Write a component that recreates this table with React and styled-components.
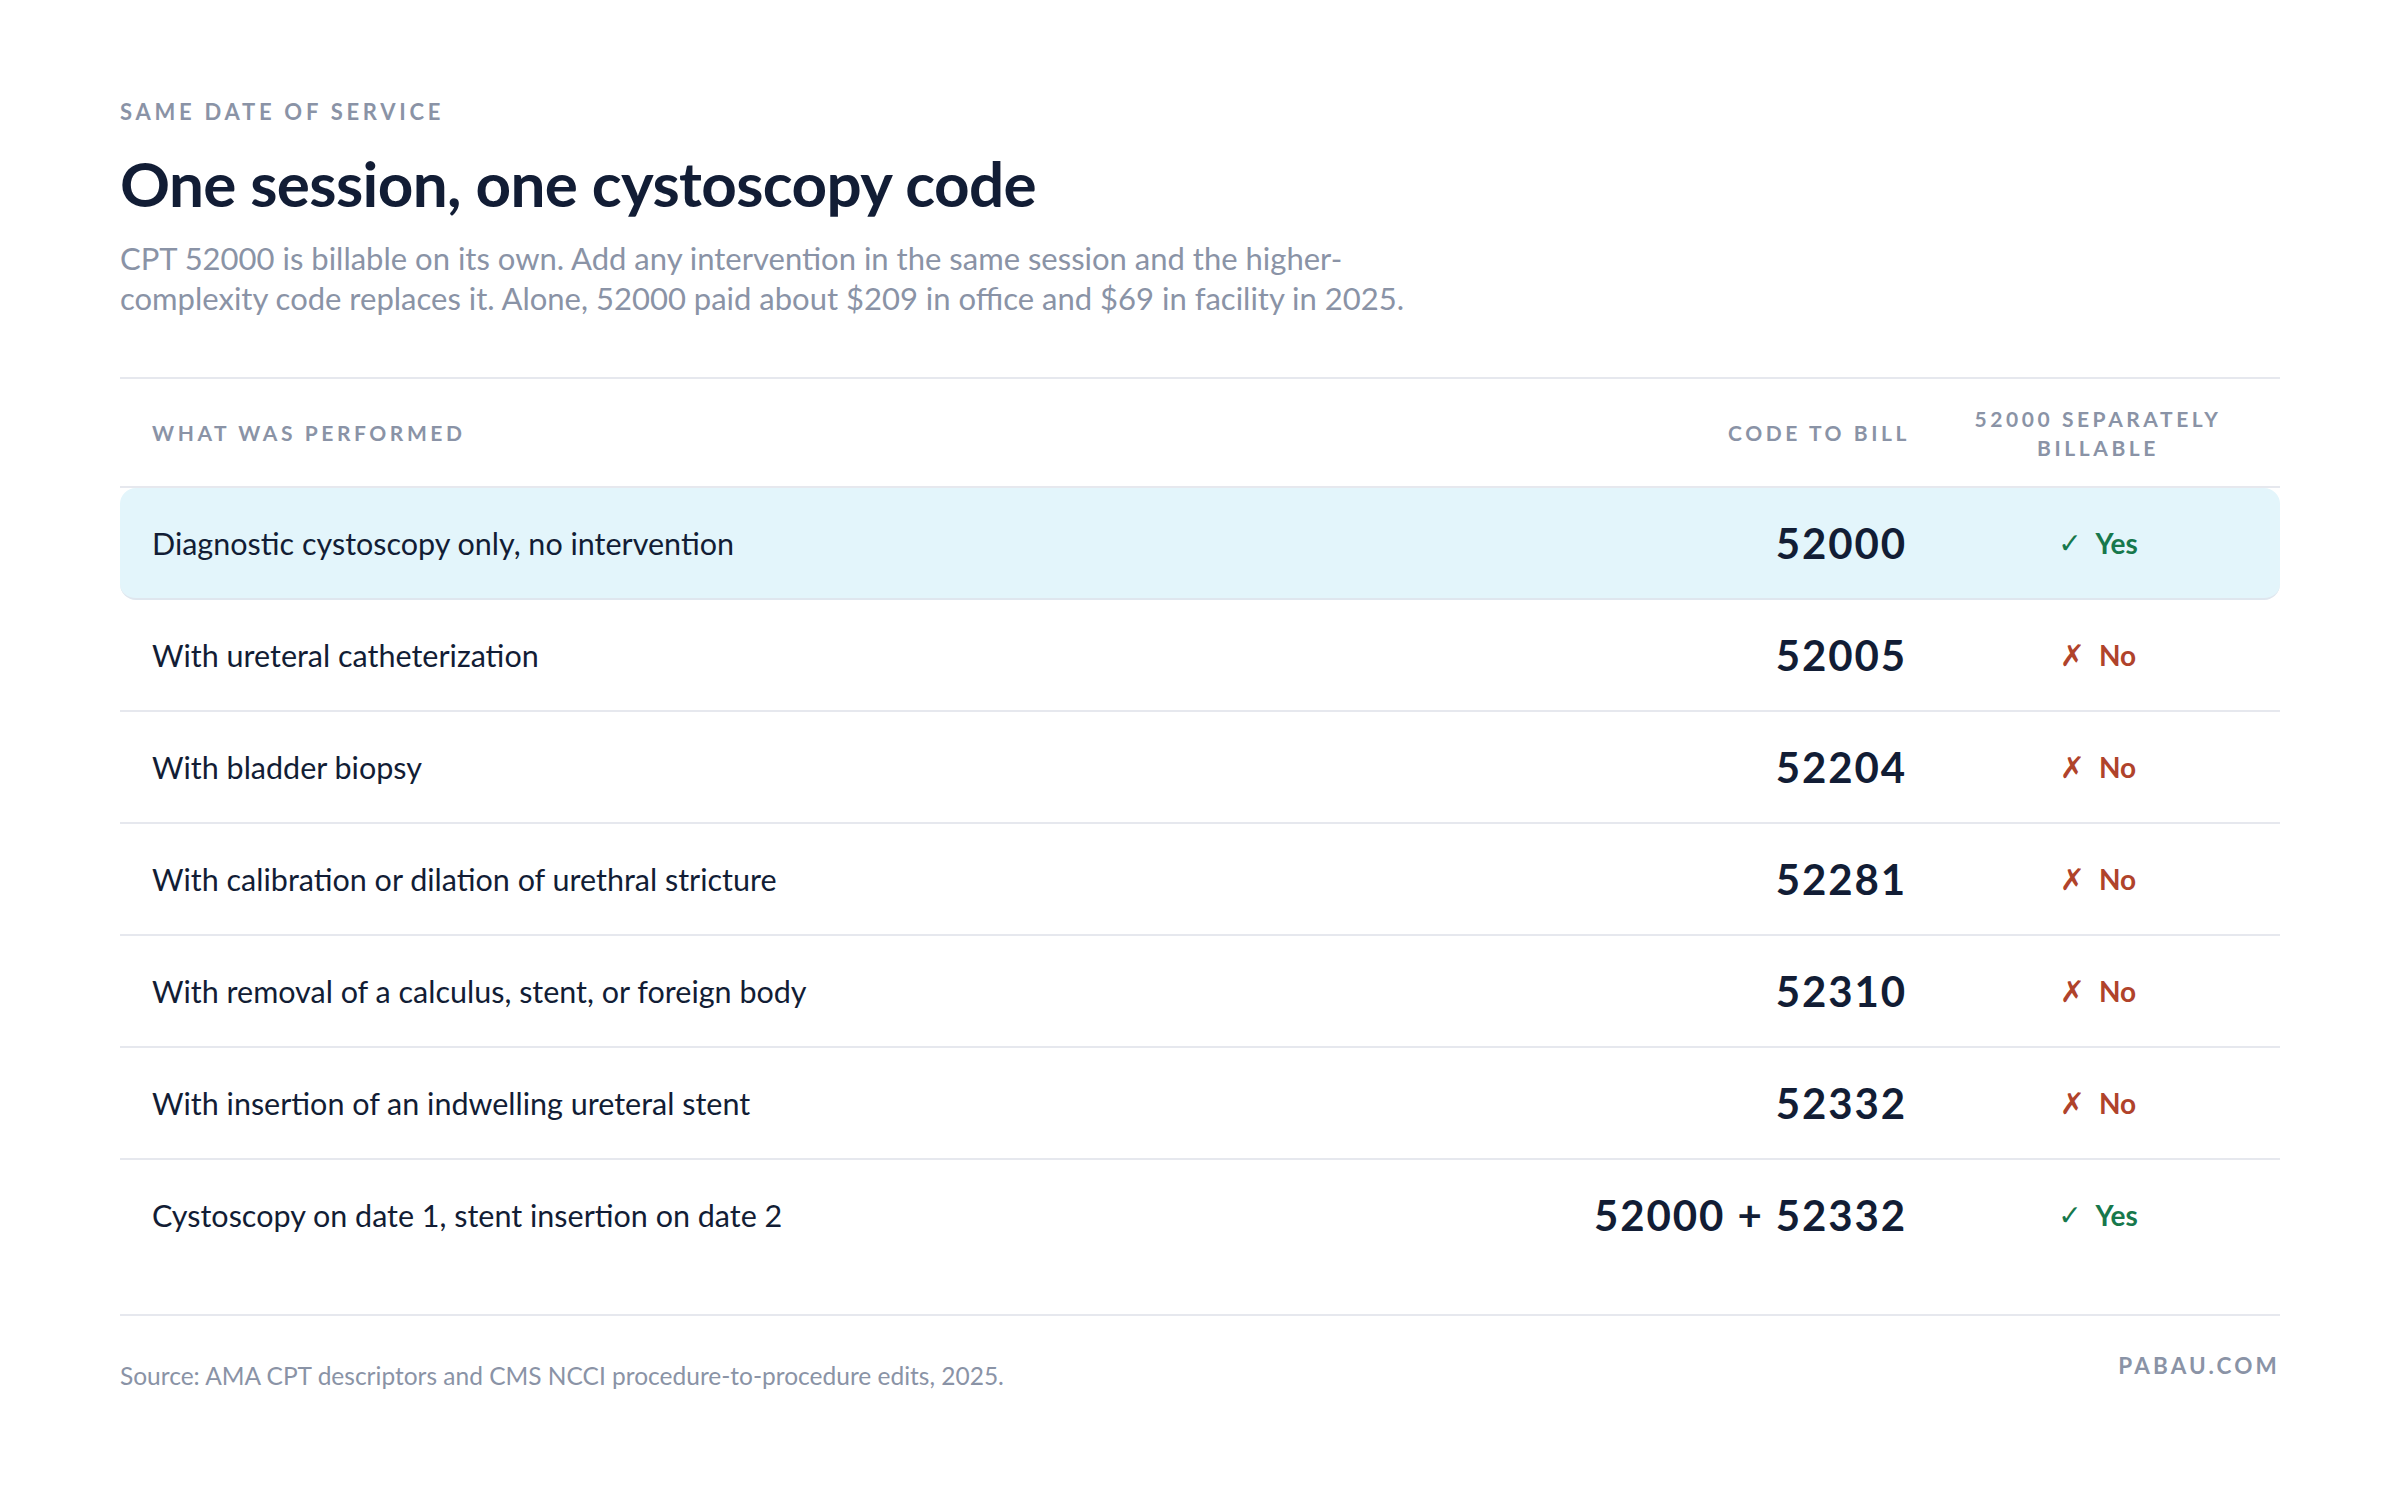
import React from "react";
import styled, { createGlobalStyle } from "styled-components";

const Global = createGlobalStyle`
  html, body { margin: 0; padding: 0; background: #ffffff; }
  body { font-family: Lato, "Noto Sans", sans-serif; -webkit-font-smoothing: antialiased; }
`;

const Page = styled.div`
  width: 2400px;
  min-height: 1502px;
  box-sizing: border-box;
  padding: 97px 120px 80px;
  color: #121d35;
`;

const Eyebrow = styled.div`
  font-size: 22px;
  font-weight: 700;
  letter-spacing: 0.17em;
  color: #8a93a6;
  line-height: 30px;
  text-transform: uppercase;
`;

const Title = styled.h1`
  margin: 20px 0 0;
  font-size: 62px;
  font-weight: 700;
  line-height: 72px;
  letter-spacing: -0.01em;
  color: #121d35;
`;

const Lead = styled.p`
  margin: 19px 0 0;
  max-width: 1300px;
  font-size: 31px;
  line-height: 40px;
  font-weight: 400;
  color: #8a93a6;
`;

const Table = styled.div`
  margin-top: 59px;
  border-top: 2px solid #e6e8ee;
`;

const Row = styled.div`
  display: grid;
  grid-template-columns: 1fr 380px 364px;
  align-items: center;
  height: ${(p) => p.$h || 110}px;
  border-bottom: ${(p) => (p.$last ? "none" : "2px solid #e6e8ee")};
  background: ${(p) => (p.$hl ? "#e3f5fb" : "transparent")};
  border-radius: ${(p) => (p.$hl ? "16px" : "0")};
  ${(p) => (p.$hl ? "border-bottom-color: #dfe6ee;" : "")}
`;

const HeadRow = styled(Row)`
  height: 107px;
`;

const HeadCell = styled.div`
  padding: 0 32px;
  font-size: 21px;
  font-weight: 700;
  letter-spacing: 0.17em;
  line-height: 29px;
  color: #8a93a6;
  text-transform: uppercase;
  text-align: ${(p) => p.$align || "left"};
  padding-right: ${(p) => (p.$align === "right" ? "6px" : "32px")};
`;

const Desc = styled.div`
  padding: 0 32px;
  font-size: 30.5px;
  font-weight: 400;
  color: #121d35;
`;

const Code = styled.div`
  padding-right: 9px;
  text-align: right;
  font-size: 42px;
  font-weight: 700;
  letter-spacing: 0.045em;
  color: #121d35;
`;

const Verdict = styled.div`
  padding: 0 32px;
  display: flex;
  justify-content: center;
  align-items: center;
  gap: 14px;
  font-size: 28px;
  font-weight: 700;
  color: ${(p) => (p.$yes ? "#17784c" : "#b0432b")};
`;

const Mark = styled.span`
  font-size: ${(p) => (p.$yes ? "28px" : "30px")};
  font-family: "DejaVu Sans", sans-serif;
  font-weight: 700;
`;

const Footer = styled.div`
  margin-top: 44px;
  border-top: 2px solid #e6e8ee;
  padding-top: 36px;
  display: flex;
  justify-content: space-between;
  align-items: flex-start;
`;

const Source = styled.div`
  margin-top: 9px;
  font-size: 24.5px;
  color: #8a93a6;
`;

const Brand = styled.div`
  font-size: 22.5px;
  font-weight: 700;
  letter-spacing: 0.14em;
  color: #8a93a6;
`;

const rows = [
  { d: "Diagnostic cystoscopy only, no intervention", c: "52000", yes: true, hl: true },
  { d: "With ureteral catheterization", c: "52005", yes: false },
  { d: "With bladder biopsy", c: "52204", yes: false },
  { d: "With calibration or dilation of urethral stricture", c: "52281", yes: false },
  { d: "With removal of a calculus, stent, or foreign body", c: "52310", yes: false },
  { d: "With insertion of an indwelling ureteral stent", c: "52332", yes: false },
  { d: "Cystoscopy on date 1, stent insertion on date 2", c: "52000 + 52332", yes: true, last: true },
];

export default function App() {
  return (
    <Page>
      <Global />
      <Eyebrow>Same date of service</Eyebrow>
      <Title>One session, one cystoscopy code</Title>
      <Lead>
        CPT 52000 is billable on its own. Add any intervention in the same session and the higher-complexity code
        replaces it. Alone, 52000 paid about $209 in office and $69 in facility in 2025.
      </Lead>
      <Table>
        <HeadRow>
          <HeadCell>What was performed</HeadCell>
          <HeadCell $align="right">Code to bill</HeadCell>
          <HeadCell $align="center">52000 separately billable</HeadCell>
        </HeadRow>
        {rows.map((r) => (
          <Row key={r.c} $hl={r.hl} $last={r.last}>
            <Desc>{r.d}</Desc>
            <Code>{r.c}</Code>
            <Verdict $yes={r.yes}>
              <Mark $yes={r.yes}>{r.yes ? "✓" : "✗"}</Mark>
              {r.yes ? "Yes" : "No"}
            </Verdict>
          </Row>
        ))}
      </Table>
      <Footer>
        <Source>Source: AMA CPT descriptors and CMS NCCI procedure-to-procedure edits, 2025.</Source>
        <Brand>PABAU.COM</Brand>
      </Footer>
    </Page>
  );
}
